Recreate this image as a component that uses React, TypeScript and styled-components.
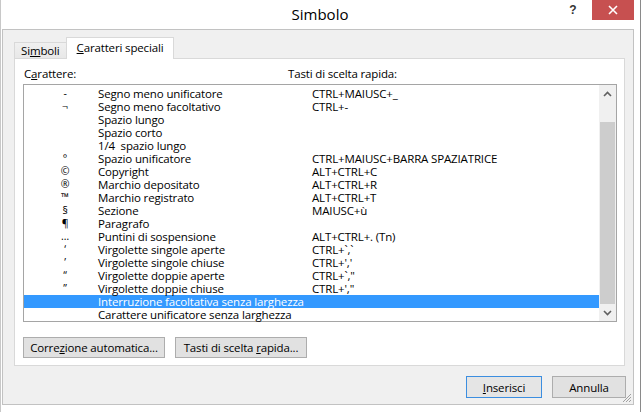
import React from "react";
import styled, { createGlobalStyle } from "styled-components";

const Global = createGlobalStyle`
  html, body { margin: 0; padding: 0; }
  body {
    background: #ffffff;
    font-family: "Open Sans", "Noto Sans", sans-serif;
    color: #000;
  }
  #root { width: 641px; height: 412px; overflow: hidden; }
`;

const Frame = styled.div`
  width: 641px;
  height: 412px;
  box-sizing: border-box;
  background: #ffffff;
  border-left: 1px solid #c8c8c8;
  border-right: 1px solid #8a8a8a;
  padding: 0 6px 0 1px;
  display: flex;
  flex-direction: column;
`;

const TitleBar = styled.div`
  height: 29px;
  display: grid;
  grid-template-columns: 1fr auto 1fr;
  align-items: start;
`;

const Title = styled.div`
  grid-column: 2;
  font-size: 15px;
  line-height: 29px;
  color: #000;
  padding-left: 4px;
`;

const Controls = styled.div`
  grid-column: 3;
  display: flex;
  justify-content: flex-end;
`;

const HelpButton = styled.div`
  width: 38px;
  height: 20px;
  display: flex;
  align-items: center;
  justify-content: center;
  font-family: "Liberation Sans", sans-serif;
  font-weight: bold;
  font-size: 12px;
  color: #333;
`;

const CloseButton = styled.div`
  width: 42px;
  height: 20px;
  background: #c75050;
  display: flex;
  align-items: center;
  justify-content: center;
`;

const Client = styled.div`
  position: relative;
  height: 376px;
  box-sizing: border-box;
  border: 1px solid #c2c2c2;
  background: #f0f0f0;
  display: flex;
  flex-direction: column;
  padding: 7px 8px 6px 11px;
  font-size: 11.5px;
  letter-spacing: -0.15px;
`;

const TabStrip = styled.div`
  height: 21px;
  display: flex;
  align-items: flex-end;
  position: relative;
  z-index: 1;
`;

const Tab = styled.div<{ $active?: boolean }>`
  box-sizing: border-box;
  height: ${(p) => (p.$active ? "22px" : "16px")};
  margin-bottom: ${(p) => (p.$active ? "-1px" : "0")};
  align-self: ${(p) => (p.$active ? "flex-start" : "flex-end")};
  padding: 0 ${(p) => (p.$active ? "10px" : "6px")};
  border: 1px solid #d9d9d9;
  border-bottom: none;
  ${(p) => (!p.$active ? "border-right: none;" : "")}
  background: ${(p) => (p.$active ? "#ffffff" : "linear-gradient(#f0f0f0, #e8e8e8)")};
  line-height: ${(p) => (p.$active ? "20px" : "15px")};
  white-space: nowrap;
`;

const Panel = styled.div`
  height: 308px;
  box-sizing: border-box;
  border: 1px solid #d9d9d9;
  background: #ffffff;
  display: flex;
  flex-direction: column;
  padding: 7px;
`;

const HeaderRow = styled.div`
  display: grid;
  grid-template-columns: 264px 1fr;
  height: 16px;
  line-height: 16px;
  padding-left: 2px;
  margin-bottom: 2px;
`;

const ListBox = styled.div`
  height: 238px;
  box-sizing: border-box;
  border: 1px solid #a5a5a5;
  display: flex;
  margin-left: 1px;
`;

const Rows = styled.div`
  flex: 1;
  padding-top: 2px;
`;

const Row = styled.div<{ $selected?: boolean }>`
  display: grid;
  grid-template-columns: 74px 214px 1fr;
  height: 13px;
  line-height: 13px;
  white-space: pre;
  background: ${(p) => (p.$selected ? "#3399ff" : "transparent")};
  color: ${(p) => (p.$selected ? "#ffffff" : "#000000")};
`;

const Glyph = styled.span`
  text-align: center;
  padding-left: 8px;
  font-size: 10.5px;
`;

const ScrollBar = styled.div`
  width: 17px;
  display: flex;
  flex-direction: column;
  background: #f0f0f0;
`;

const ArrowBox = styled.div`
  height: 17px;
  display: flex;
  align-items: center;
  justify-content: center;
`;

const Track = styled.div`
  flex: 1;
  display: flex;
  flex-direction: column;
  padding-top: 20px;
`;

const Thumb = styled.div`
  flex: 1;
  background: #cdcdcd;
  margin: 0 1px;
`;

const ButtonRow = styled.div`
  display: flex;
  gap: 10px;
  margin-top: 15px;
  margin-left: 1px;
`;

const Button = styled.div<{ $w: number; $h: number; $default?: boolean }>`
  box-sizing: border-box;
  width: ${(p) => p.$w}px;
  height: ${(p) => p.$h}px;
  border: 1px solid ${(p) => (p.$default ? "#3c8ee0" : "#adadad")};
  background: ${(p) => (p.$default ? "#e5e5e5" : "#e1e1e1")};
  display: flex;
  align-items: center;
  justify-content: center;
  white-space: pre;
`;

const Footer = styled.div`
  display: flex;
  justify-content: flex-end;
  gap: 10px;
  margin-top: 10px;
  margin-right: -1px;
`;

const Grip = styled.svg`
  position: absolute;
  right: 1px;
  bottom: 1px;
`;

const U = styled.span`
  text-decoration: underline;
  text-underline-offset: 1px;
`;

type Item = { g: string; name: string; key: string };

const items: Item[] = [
  { g: "-", name: "Segno meno unificatore", key: "CTRL+MAIUSC+_" },
  { g: "¬", name: "Segno meno facoltativo", key: "CTRL+-" },
  { g: "", name: "Spazio lungo", key: "" },
  { g: "", name: "Spazio corto", key: "" },
  { g: "", name: "1/4  spazio lungo", key: "" },
  { g: "°", name: "Spazio unificatore", key: "CTRL+MAIUSC+BARRA SPAZIATRICE" },
  { g: "©", name: "Copyright", key: "ALT+CTRL+C" },
  { g: "®", name: "Marchio depositato", key: "ALT+CTRL+R" },
  { g: "™", name: "Marchio registrato", key: "ALT+CTRL+T" },
  { g: "§", name: "Sezione", key: "MAIUSC+ù" },
  { g: "¶", name: "Paragrafo", key: "" },
  { g: "…", name: "Puntini di sospensione", key: "ALT+CTRL+. (Tn)" },
  { g: "‘", name: "Virgolette singole aperte", key: "CTRL+`,`" },
  { g: "’", name: "Virgolette singole chiuse", key: "CTRL+','" },
  { g: "“", name: "Virgolette doppie aperte", key: "CTRL+`,\"" },
  { g: "”", name: "Virgolette doppie chiuse", key: "CTRL+',\"" },
  { g: "", name: "Interruzione facoltativa senza larghezza", key: "" },
  { g: "", name: "Carattere unificatore senza larghezza", key: "" },
];

const Chevron = ({ up }: { up?: boolean }) => (
  <svg width="9" height="6" viewBox="0 0 9 6">
    <path
      d={up ? "M1 5 L4.5 1.5 L8 5" : "M1 1 L4.5 4.5 L8 1"}
      fill="none"
      stroke="#606060"
      strokeWidth="1.6"
    />
  </svg>
);

export default function App() {
  return (
    <>
      <Global />
      <Frame>
        <TitleBar>
          <Title>Simbolo</Title>
          <Controls>
            <HelpButton>?</HelpButton>
            <CloseButton>
              <svg width="10" height="10" viewBox="0 0 10 10">
                <path d="M1 1 L9 9 M9 1 L1 9" stroke="#fff" strokeWidth="1.6" />
              </svg>
            </CloseButton>
          </Controls>
        </TitleBar>
        <Client>
          <TabStrip>
            <Tab>
              <span>
                Si<U>m</U>boli
              </span>
            </Tab>
            <Tab $active>
              <span>
                <U>C</U>aratteri speciali
              </span>
            </Tab>
          </TabStrip>
          <Panel>
            <HeaderRow>
              <span>
                C<U>a</U>rattere:
              </span>
              <span>Tasti di scelta rapida:</span>
            </HeaderRow>
            <ListBox>
              <Rows>
                {items.map((it, i) => (
                  <Row key={i} $selected={i === 16}>
                    <Glyph>{it.g}</Glyph>
                    <span>{it.name}</span>
                    <span>{it.key}</span>
                  </Row>
                ))}
              </Rows>
              <ScrollBar>
                <ArrowBox>
                  <Chevron up />
                </ArrowBox>
                <Track>
                  <Thumb />
                </Track>
                <ArrowBox>
                  <Chevron />
                </ArrowBox>
              </ScrollBar>
            </ListBox>
            <ButtonRow>
              <Button $w={142} $h={21}>
                <span>
                  Corre<U>z</U>ione automatica...
                </span>
              </Button>
              <Button $w={132} $h={21}>
                <span>
                  Tasti di scelta <U>r</U>apida...
                </span>
              </Button>
            </ButtonRow>
          </Panel>
          <Footer>
            <Button $w={76} $h={22} $default>
              <span>
                <U>I</U>nserisci
              </span>
            </Button>
            <Button $w={74} $h={22}>
              <span>Annulla</span>
            </Button>
          </Footer>
          <Grip width="11" height="11" viewBox="0 0 11 11">
            <path d="M10 2 L2 10 M10 5 L5 10 M10 8 L8 10" stroke="#a0a0a0" strokeWidth="1" />
          </Grip>
        </Client>
      </Frame>
    </>
  );
}
